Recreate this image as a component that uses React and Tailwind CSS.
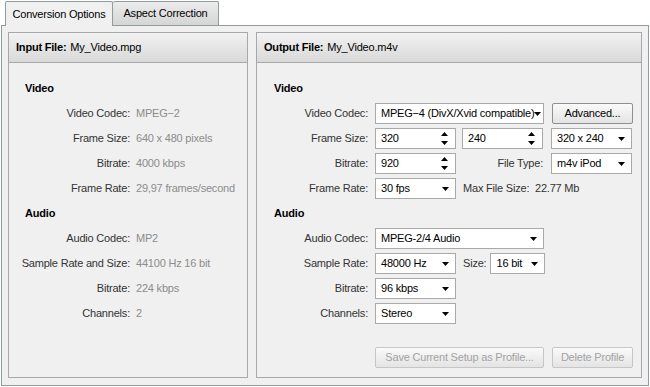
import React from 'react';

const font = { fontFamily: '"Liberation Sans", Arial, sans-serif' };

function Arrow() {
  return (
    <svg width="7" height="4" viewBox="0 0 7 4" className="shrink-0">
      <path d="M0 0h7L3.5 4z" fill="#000" />
    </svg>
  );
}

function SpinArrows() {
  return (
    <svg width="7" height="13" viewBox="0 0 7 13" className="shrink-0">
      <path d="M3.5 0L7 4H0z" fill="#000" />
      <path d="M0 9h7L3.5 13z" fill="#000" />
    </svg>
  );
}

function Select({ value, w, pad = 'pr-[6px]' }) {
  return (
    <div className={`${w} h-[21px] bg-white border border-[#a9a9a9] flex items-center justify-between pl-[5px] ${pad} text-black overflow-hidden`}>
      <span className="whitespace-nowrap">{value}</span>
      <Arrow />
    </div>
  );
}

function Spin({ value }) {
  return (
    <div className="w-[81px] h-[21px] bg-white border border-[#a9a9a9] flex items-center justify-between pl-[5px] pr-[7px] text-black">
      <span>{value}</span>
      <SpinArrows />
    </div>
  );
}

function Button({ children, w, disabled }) {
  return (
    <div className={`${w} h-[21px] rounded-[2px] border flex items-center justify-center bg-gradient-to-b from-[#fafafa] to-[#e4e4e4] ${disabled ? 'border-[#c6c6c6] text-[#a3a3a3]' : 'border-[#8f8f8f] text-black'}`}>
      {children}
    </div>
  );
}

function Header({ label, file }) {
  return (
    <div className="h-[30px] flex items-center pl-[7px] border-b border-[#a8a8a8] bg-gradient-to-b from-[#f2f2f2] to-[#d9d9d9]">
      <span className="font-bold text-black">{label}</span>
      <span className="ml-[4px] text-black">{file}</span>
    </div>
  );
}

function InfoRow({ label, value }) {
  return (
    <div className="h-[25px] flex items-center">
      <div className="w-[105px] flex justify-end text-[#333] whitespace-nowrap">{label}</div>
      <div className="ml-[6px] text-[#8c8c8c] whitespace-nowrap">{value}</div>
    </div>
  );
}

function CtlRow({ label, children }) {
  return (
    <div className="h-[25px] flex items-center">
      <div className="w-[94px] flex justify-end text-[#333] whitespace-nowrap">{label}</div>
      <div className="ml-[7px] flex items-center">{children}</div>
    </div>
  );
}

function SectionTitle({ children }) {
  return <div className="h-[25px] flex items-center font-bold text-black">{children}</div>;
}

export default function App() {
  return (
    <div style={font} className="w-[650px] h-[387px] bg-white text-[11px] tracking-[-0.2px] leading-none relative overflow-hidden">
      {/* Tabs */}
      <div className="h-[25px] flex items-end pl-[5px]">
        <div className="relative z-10 w-[108px] h-[25px] border border-b-0 border-[#919b9c] bg-[#f0f0f0] rounded-t-[2px] flex items-center justify-center text-black mb-[-1px]">
          Conversion Options
        </div>
        <div className="w-[106px] h-[24px] border border-b-0 border-l-0 border-[#919b9c] bg-gradient-to-b from-[#ececec] to-[#d5d5d5] rounded-t-[2px] flex items-center justify-center text-black">
          Aspect Correction
        </div>
      </div>

      {/* Pane */}
      <div className="ml-[1px] w-[648px] h-[361px] border border-[#919b9c] bg-[#f0f0f0] px-[6px] pt-[6px] pb-[7px] flex gap-[8px]">
        {/* Input panel */}
        <div className="w-[240px] h-full border border-[#a8a8a8] flex flex-col">
          <Header label="Input File:" file="My_Video.mpg" />
          <div className="pl-[16px] pt-[13px]">
            <SectionTitle>Video</SectionTitle>
            <InfoRow label="Video Codec:" value="MPEG−2" />
            <InfoRow label="Frame Size:" value="640 x 480 pixels" />
            <InfoRow label="Bitrate:" value="4000 kbps" />
            <InfoRow label="Frame Rate:" value="29,97 frames/second" />
            <SectionTitle>Audio</SectionTitle>
            <InfoRow label="Audio Codec:" value="MP2" />
            <InfoRow label="Sample Rate and Size:" value="44100 Hz 16 bit" />
            <InfoRow label="Bitrate:" value="224 kbps" />
            <InfoRow label="Channels:" value="2" />
          </div>
        </div>

        {/* Output panel */}
        <div className="flex-1 h-full border border-[#a8a8a8] flex flex-col">
          <Header label="Output File:" file="My_Video.m4v" />
          <div className="pl-[17px] pt-[13px]">
            <SectionTitle>Video</SectionTitle>
            <CtlRow label="Video Codec:">
              <Select value="MPEG−4 (DivX/Xvid compatible)" w="w-[169px]" pad="pr-[3px]" />
              <div className="ml-[8px]"><Button w="w-[81px]">Advanced...</Button></div>
            </CtlRow>
            <CtlRow label="Frame Size:">
              <Spin value="320" />
              <div className="ml-[6px]"><Spin value="240" /></div>
              <div className="ml-[8px]"><Select value="320 x 240" w="w-[81px]" /></div>
            </CtlRow>
            <CtlRow label="Bitrate:">
              <Spin value="920" />
              <div className="w-[81px] ml-[6px] text-right text-[#333]">File Type:</div>
              <div className="ml-[8px]"><Select value="m4v iPod" w="w-[81px]" /></div>
            </CtlRow>
            <CtlRow label="Frame Rate:">
              <Select value="30 fps" w="w-[81px]" />
              <div className="ml-[7px] text-[#333] whitespace-pre">Max File Size:  22.77 Mb</div>
            </CtlRow>
            <SectionTitle>Audio</SectionTitle>
            <CtlRow label="Audio Codec:">
              <Select value="MPEG-2/4 Audio" w="w-[169px]" />
            </CtlRow>
            <CtlRow label="Sample Rate:">
              <Select value="48000 Hz" w="w-[81px]" />
              <div className="ml-[7px] text-[#333]">Size:</div>
              <div className="ml-[4px]"><Select value="16 bit" w="w-[55px]" /></div>
            </CtlRow>
            <CtlRow label="Bitrate:">
              <Select value="96 kbps" w="w-[81px]" />
            </CtlRow>
            <CtlRow label="Channels:">
              <Select value="Stereo" w="w-[81px]" />
            </CtlRow>
          </div>
          <div className="mt-auto pb-[9px] pl-[118px] flex gap-[8px]">
            <Button w="w-[169px]" disabled>Save Current Setup as Profile...</Button>
            <Button w="w-[81px]" disabled>Delete Profile</Button>
          </div>
        </div>
      </div>
    </div>
  );
}
